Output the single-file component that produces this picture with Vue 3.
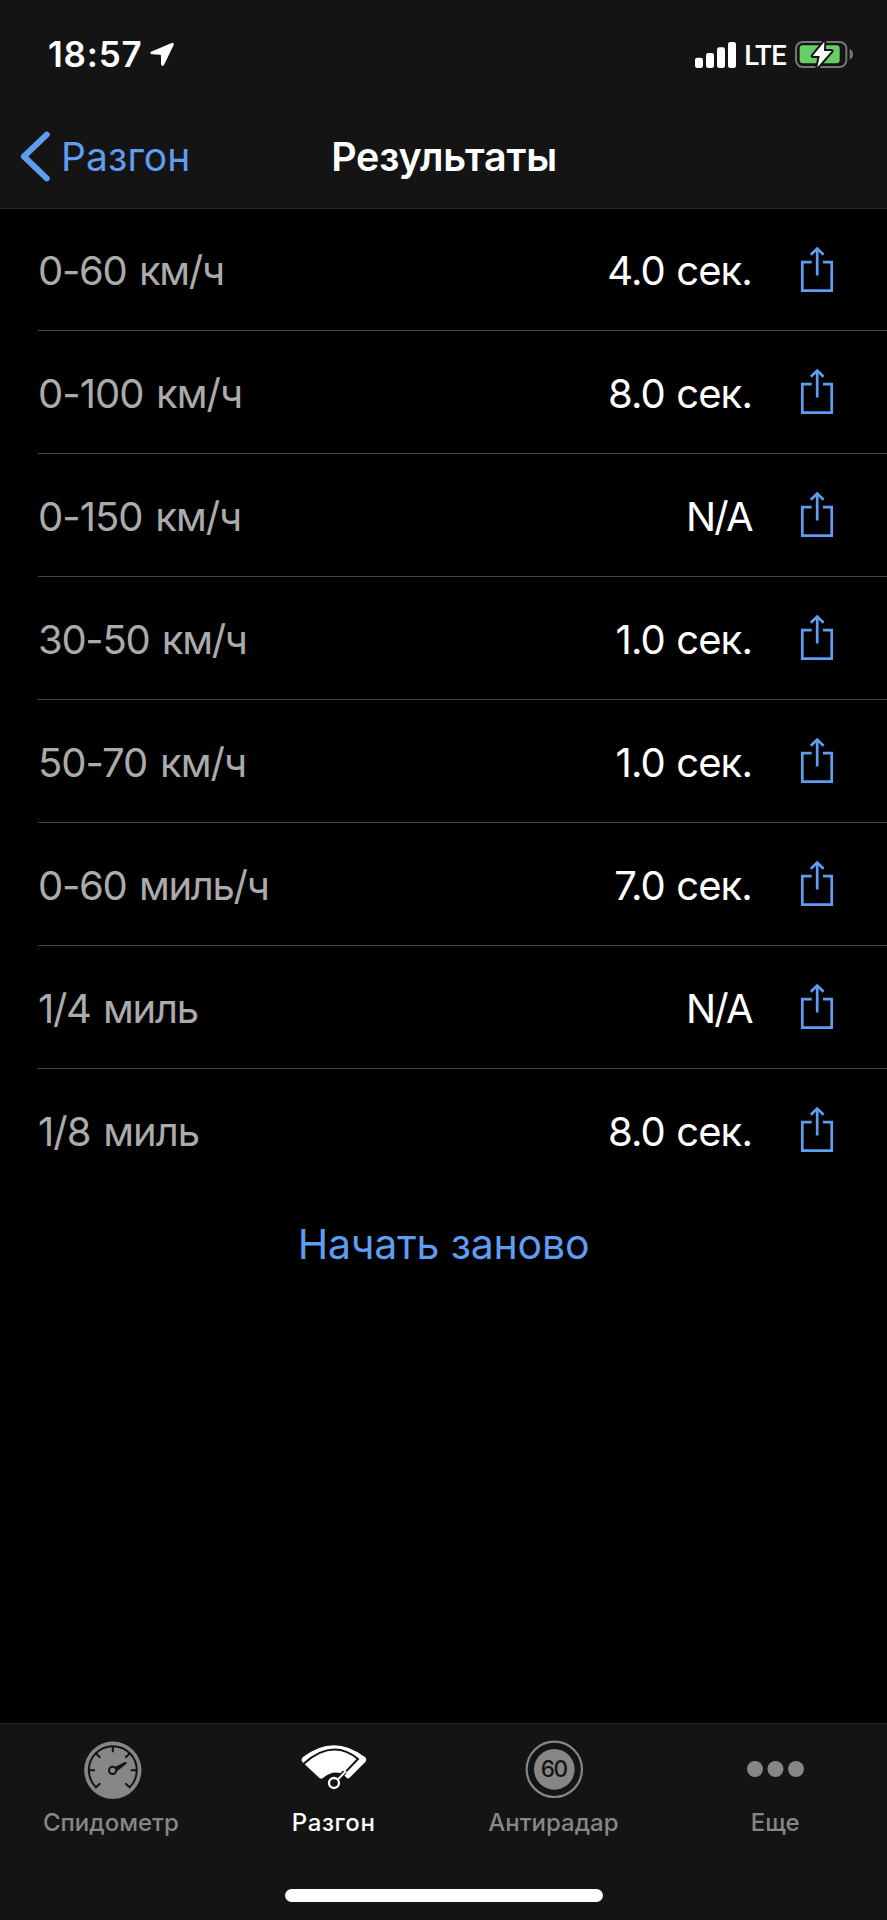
<script setup>
const results = [
  { label: '0-60 км/ч', value: '4.0 сек.', fit: 'tight' },
  { label: '0-100 км/ч', value: '8.0 сек.', fit: 'normal' },
  { label: '0-150 км/ч', value: 'N/A', fit: 'normal' },
  { label: '30-50 км/ч', value: '1.0 сек.', fit: 'tight' },
  { label: '50-70 км/ч', value: '1.0 сек.', fit: 'normal' },
  { label: '0-60 миль/ч', value: '7.0 сек.', fit: 'tight' },
  { label: '1/4 миль', value: 'N/A', fit: 'tight' },
  { label: '1/8 миль', value: '8.0 сек.', fit: 'normal' },
]
</script>

<template>
  <div class="screen">
    <header class="top">
      <div class="status">
        <div class="clock">
          <span class="time">18:57</span>
          <svg class="location" viewBox="450 125 72 75">
            <path d="M453 154 L515 128 Q523 126 521 134 L492 194 Q485 201 483 192 V166 Q483 163 480 163 L456 162 Q448 159 453 154 Z" fill="#fff" />
          </svg>
        </div>
        <div class="indicators">
          <svg class="signal" viewBox="0 0 123 78">
            <rect x="0" y="47" width="24" height="31" rx="7" />
            <rect x="33" y="33" width="24" height="45" rx="7" />
            <rect x="66" y="16" width="24" height="62" rx="7" />
            <rect x="99" y="0" width="24" height="78" rx="7" />
          </svg>
          <span class="network">LTE</span>
          <svg class="battery" viewBox="376 60 176 87">
            <rect x="379" y="66" width="151" height="75" rx="20" fill="none" stroke="#767676" stroke-width="6" />
            <path d="M540 87 Q550 91 550 103 Q550 115 540 119 Z" fill="#767676" />
            <rect x="390" y="76" width="120" height="54" rx="10" fill="#65cf66" />
            <path d="M464 65 L429 108 H450 L443 142 L486 93 H463 Z" fill="#fff" stroke="#141414" stroke-width="12" paint-order="stroke" stroke-linejoin="round" />
          </svg>
        </div>
      </div>
      <nav class="nav">
        <button class="back">
          <svg viewBox="61 392 92 154">
            <path d="M141 403 L72 469 L141 535" fill="none" stroke="currentColor" stroke-width="18" stroke-linecap="round" stroke-linejoin="round" />
          </svg>
          <span>Разгон</span>
        </button>
        <h1>Результаты</h1>
      </nav>
    </header>

    <main>
      <ul class="results">
        <li v-for="row in results" :key="row.label">
          <span class="label" :class="row.fit">{{ row.label }}</span>
          <span class="value" :class="{ missing: row.value === 'N/A' }">{{ row.value }}</span>
          <svg class="share" viewBox="0 0 32 45">
            <path d="M10.7 15.2 H1.3 V43.6 H30.7 V15.2 H22" />
            <path d="M16.2 28.5 V2" />
            <path d="M9.8 7.7 L16.2 1.6 L22.6 7.7" />
          </svg>
        </li>
      </ul>
      <button class="restart">Начать заново</button>
    </main>

    <footer class="tabs">
      <div class="tab">
        <svg viewBox="245 92 175 180">
          <circle cx="337.500" cy="179.500" r="86" fill="#868686" />
          <g fill="none" stroke="#141414" stroke-width="6">
            <path d="M300 219 L287 231 A72 72 0 1 1 388 231 L375 219" />
            <path d="M265 179.500 H284 M410 179.500 H391 M337.500 107 V126 M286.500 128.500 L300 142 M388.500 128.500 L375 142" />
            <circle cx="337" cy="180" r="11" />
          </g>
          <path d="M345 169 L375 154 Q381 156 379 160 L351 182 Z" fill="#141414" />
        </svg>
        <span>Спидометр</span>
      </div>
      <div class="tab active">
        <svg viewBox="101 92 175 180">
          <g fill="#fff">
            <path d="M100 141 Q193 68 288 141 Q294 148 288 155 L240 203 Q236 206 232 202 L223 193 Q193 176 161 203 Q153 208 148 201 L99 155 Q94 148 100 141 Z" />
            <path d="M103 160 Q190 83 266 146 L216 198" fill="none" stroke="#141414" stroke-width="6" />
            <circle cx="194" cy="218" r="23" fill="#141414" />
            <path d="M204 208 L226 185" stroke="#141414" stroke-width="14" />
            <path d="M206 207 L230 182" stroke="#fff" stroke-width="6" />
            <circle cx="194" cy="218" r="15" fill="#141414" stroke="#fff" stroke-width="7" />
          </g>
        </svg>
        <span class="race">Разгон</span>
      </div>
      <div class="tab">
        <svg viewBox="165 91 175 180">
          <circle cx="253" cy="176" r="83" fill="none" stroke="#868686" stroke-width="6.500" />
          <circle cx="253" cy="176" r="61" fill="#868686" />
          <text x="251" y="200" text-anchor="middle">60</text>
        </svg>
        <span class="radar">Антирадар</span>
      </div>
      <div class="tab">
        <svg viewBox="831 92 175 180" fill="#868686">
          <circle cx="855" cy="176" r="24" />
          <circle cx="916.500" cy="176" r="24" />
          <circle cx="978" cy="176" r="24" />
        </svg>
        <span class="more">Еще</span>
      </div>
      <div class="home"></div>
    </footer>
  </div>
</template>

<style>
body {
  background: #000;
}
</style>

<style scoped>
.screen {
  width: 887px;
  height: 1920px;
  display: flex;
  flex-direction: column;
  background: #000;
  color: #fff;
  font-family: Inter, "Noto Sans", sans-serif;
  overflow: hidden;
}
svg {
  display: block;
  flex: none;
  overflow: visible;
}
button {
  border: 0;
  padding: 0;
  background: none;
  color: #5f9df0;
  font-family: inherit;
}
.top {
  box-sizing: border-box;
  height: 209px;
  background: #141414;
  border-bottom: 1px solid #262626;
}
.status {
  box-sizing: border-box;
  height: 109px;
  padding: 0 33px 0 48px;
  display: flex;
  justify-content: space-between;
}
.clock {
  display: flex;
  align-items: center;
  height: 108px;
}
.time {
  width: 102px;
  font-size: 35px;
  font-weight: 600;
  letter-spacing: 0.8px;
}
.location {
  width: 24px;
  height: 25px;
}
.indicators {
  display: flex;
  align-items: center;
  height: 109px;
}
.signal {
  width: 41px;
  height: 26px;
  fill: #fff;
}
.network {
  width: 51px;
  margin-left: 8px;
  padding-top: 2px;
  font: 500 27.500px Roboto, sans-serif;
  letter-spacing: -0.7px;
}
.battery {
  width: 58.700px;
  height: 29px;
}
.nav {
  height: 95px;
  display: grid;
  grid-template-columns: 1fr auto 1fr;
  align-items: center;
}
.back {
  display: flex;
  align-items: center;
  gap: 10px;
  padding-left: 20px;
  font-size: 39px;
  letter-spacing: 0.1px;
}
.back svg {
  width: 31px;
  height: 51px;
}
h1 {
  margin: 0 0 0 1px;
  font-size: 39.500px;
  font-weight: 600;
  letter-spacing: -0.2px;
}
.results {
  list-style: none;
  margin: 0;
  padding: 0 0 0 38px;
}
.results li {
  box-sizing: border-box;
  height: 123px;
  display: flex;
  align-items: center;
  padding-right: 54px;
  border-bottom: 1px solid #474747;
  font-size: 40px;
}
.results li:first-child {
  height: 122px;
}
.results li:last-child {
  border-bottom-color: transparent;
}
.label,
.value {
  padding-top: 2px;
}
.label {
  flex: 1;
  color: #ababab;
  letter-spacing: -1px;
  word-spacing: 2.500px;
}
.label.tight {
  letter-spacing: -1.3px;
}
.value {
  letter-spacing: -0.9px;
  word-spacing: 1px;
}
.value.missing {
  letter-spacing: -1.7px;
}
.share {
  width: 32px;
  height: 45px;
  margin: 0 0 1px 49px;
  fill: none;
  stroke: #5f9df0;
  stroke-width: 2.700;
}
.restart {
  display: block;
  margin: 25px auto 0;
  font-size: 41px;
  line-height: 54px;
  letter-spacing: -0.2px;
}
.tabs {
  box-sizing: border-box;
  height: 197px;
  margin-top: auto;
  padding-top: 17px;
  display: grid;
  grid-template-columns: repeat(4, 1fr);
  grid-template-rows: 148px 14px;
  background: #141414;
  border-top: 1px solid #242424;
}
.tab {
  display: flex;
  flex-direction: column;
  align-items: center;
  color: #868686;
  font-size: 24px;
  font-weight: 500;
}
.tab.active {
  color: #fff;
}
.tab svg {
  width: 58.300px;
  height: 60px;
}
.tab span {
  margin-top: 7px;
  line-height: 30px;
}
.tab .race {
  padding-left: 2px;
  letter-spacing: 0.6px;
}
.tab .radar,
.tab .more {
  padding-right: 2px;
}
.tab text {
  font: 500 68px Inter, sans-serif;
  letter-spacing: -5px;
  fill: #141414;
}
.home {
  grid-column: 1 / -1;
  justify-self: center;
  width: 318px;
  height: 13px;
  border-radius: 7px;
  background: #fff;
}
</style>
